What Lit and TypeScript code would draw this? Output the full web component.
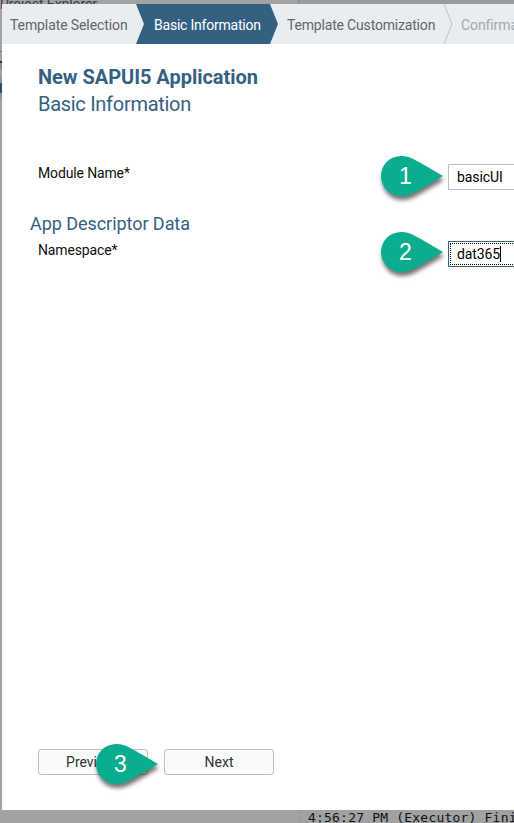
import { LitElement, html, css, svg } from "lit";
import { customElement, property } from "lit/decorators.js";

@customElement("step-marker")
class StepMarker extends LitElement {
  @property() label = "";
  static styles = css`
    :host { position: absolute; display: block; width: 62px; height: 40px; }
    svg { display: block; overflow: visible; filter: drop-shadow(1px 4px 2px rgba(0, 0, 0, 0.55)); }
    path { fill: #0aae8f; }
    .num { position: absolute; left: 0; top: 0; width: 49px; height: 40px; line-height: 41px; text-align: center; color: #fff; font-family: "Liberation Sans", Arial, sans-serif; font-size: 23px; }
  `;
  render() {
    return html`<svg width="62" height="40" viewBox="0 0 62 40">
      ${svg`<path d="M20 0C30 0 36 5 62 20C36 35 30 40 20 40A20 20 0 0 1 20 0Z"/>`}
    </svg><span class="num">${this.label}</span>`;
  }
}

@customElement("app-root")
class AppRoot extends LitElement {
  static styles = css`
    :host { display: block; position: relative; width: 514px; height: 823px; overflow: hidden; background: #a2a2a2; font-family: Roboto, "Liberation Sans", sans-serif; font-size: 14px; color: #111; white-space: nowrap; }
    * { box-sizing: border-box; }
    .behind { position: absolute; }
    .panel { left: 298px; top: 0; width: 216px; height: 823px; background: #979b9d; border-left: 1px solid #858b8e; }
    .console { left: 298px; top: 810px; width: 216px; height: 13px; background: #a0a1a2; border-left: 4px solid #999ea2; padding-left: 6px; font: 13px/16px "DejaVu Sans Mono", monospace; letter-spacing: 0.2px; color: #111; overflow: hidden; }
    .explorer { left: 0; top: -4px; line-height: 16px; color: #3d3d3d; font-size: 14px; letter-spacing: -0.1px; }
    .edge { left: 0; width: 2px; }
    .e1 { top: 51px; height: 1px; background: #777; }
    .e2 { top: 61px; height: 8px; background: #72959a; border-top: 2px solid #333; }
    .e3 { top: 76px; height: 23px; background: #8f989e; }
    .e4 { top: 83px; height: 10px; background: #295174; }
    .dialog { position: relative; display: flex; flex-direction: column; margin-left: 2px; border-top: 4px solid transparent; background-clip: padding-box; background-color: #fff; height: 810px; }
    .steps { display: flex; height: 40px; background: #e8edf1; line-height: 43px; color: #666; font-size: 14px; flex: none; }
    .step { flex: none; padding-left: 8px; }
    .first { width: 134px; letter-spacing: -0.1px; }
    .active { width: 143px; padding-left: 18px; background: #346182; color: #fff; letter-spacing: -0.22px; clip-path: polygon(0 0, 134px 0, 142px 20px, 134px 40px, 0 40px, 8px 20px); }
    .third { width: 164px; letter-spacing: -0.18px; }
    .sep { width: 10px; height: 40px; flex: none; fill: none; stroke: #bcc2c6; }
    .last { color: #a5a9ac; letter-spacing: -0.1px; }
    .body { display: flex; flex-direction: column; padding: 20px 0 0 36px; flex: 1; }
    .title { color: #346182; font-weight: 700; font-size: 20px; letter-spacing: -0.03px; line-height: 26px; }
    .subtitle { color: #346182; font-size: 20px; line-height: 28px; letter-spacing: -0.29px; }
    .row { display: flex; justify-content: space-between; height: 26px; }
    .r1 { margin-top: 46px; }
    .row label { line-height: 19px; letter-spacing: -0.14px; }
    .field { width: 90px; margin-right: -24px; height: 26px; border: 1px solid #bfbfbf; background: #fff; padding-left: 8px; line-height: 25px; letter-spacing: -0.1px; color: #000; flex: none; }
    .focus { border-color: #346182; padding: 1px 0 1px 1px; }
    .inner { display: flex; align-items: center; height: 22px; border: 1px dotted #000; padding-left: 6px; }
    .caret { width: 1px; height: 16px; background: #000; }
    .section { margin: 22px 0 0 -8px; font-size: 18px; line-height: 24px; height: 29px; letter-spacing: -0.05px; color: #346182; }
    .actions { display: flex; gap: 16px; margin-top: auto; padding-bottom: 35px; }
    button { width: 110px; height: 26px; border: 1px solid #bfbfbf; border-radius: 3px; background: #f9fafa; font: inherit; line-height: 25px; color: #333; padding: 0; }
    .m1 { left: 381px; top: 156px; }
    .m2 { left: 381px; top: 232px; }
    .m3 { left: 96px; top: 744px; }
  `;
  render() {
    return html`
      <div class="behind panel"></div>
      <div class="behind explorer">Project Explorer</div>
      <div class="behind edge e1"></div><div class="behind edge e2"></div>
      <div class="behind edge e3"></div><div class="behind edge e4"></div>
      <div class="behind console">4:56:27 PM (Executor) Finished</div>
      <div class="dialog">
        <div class="steps">
          <div class="step first">Template Selection</div>
          <div class="step active">Basic Information</div>
          <div class="step third">Template Customization</div>
          <svg class="sep" viewBox="0 0 10 40"><path d="M1 0L9 20L1 40"/></svg>
          <div class="step last">Confirmation</div>
        </div>
        <div class="body">
          <div class="title">New SAPUI5 Application</div>
          <div class="subtitle">Basic Information</div>
          <div class="row r1"><label>Module Name*</label><div class="field">basicUI</div></div>
          <div class="section">App Descriptor Data</div>
          <div class="row"><label>Namespace*</label><div class="field focus"><div class="inner">dat365<i class="caret"></i></div></div></div>
          <div class="actions"><button>Previous</button><button>Next</button></div>
        </div>
      </div>
      <step-marker class="m1" label="1"></step-marker>
      <step-marker class="m2" label="2"></step-marker>
      <step-marker class="m3" label="3"></step-marker>
    `;
  }
}
